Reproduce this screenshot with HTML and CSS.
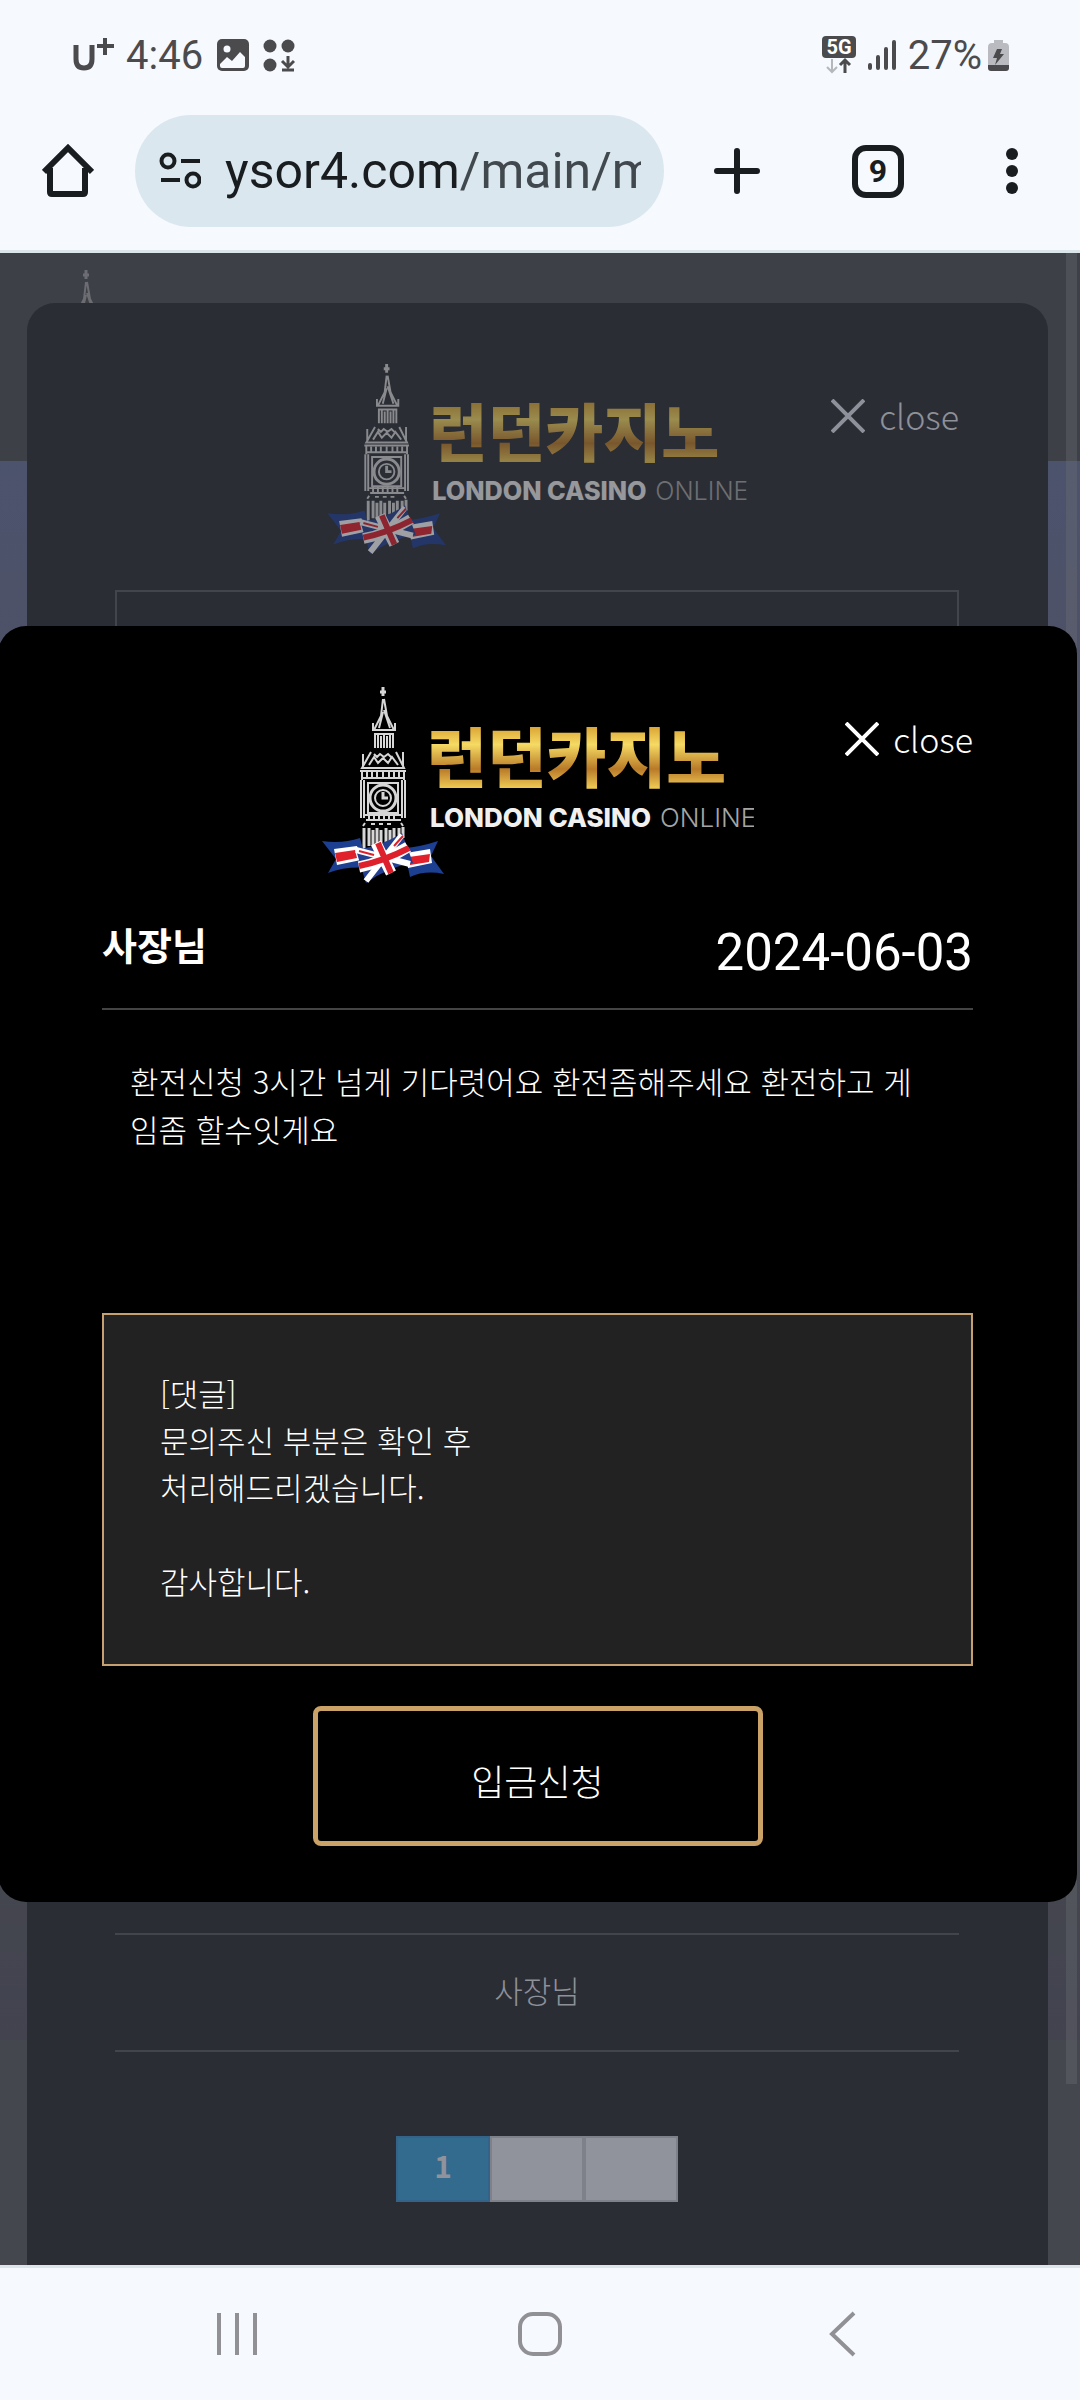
FILE: index.html
```
<!DOCTYPE html>
<html lang="ko">
<head>
  <meta charset="UTF-8">
  <meta name="viewport" content="width=device-width, initial-scale=1.0">
  <title>런던카지노</title>
  <link rel="stylesheet" href="styles.css">
</head>
<body>
  <!-- Shared logo drawing -->
  <svg class="defs" width="0" height="0" aria-hidden="true">
    <defs>
      <linearGradient id="gold" x1="0" y1="0" x2="0" y2="1">
        <stop offset="0.2" stop-color="#d9a233"/>
        <stop offset="0.4" stop-color="#f5da63"/>
        <stop offset="0.66" stop-color="#b97a28"/>
        <stop offset="0.85" stop-color="#ecc552"/>
      </linearGradient>
      <symbol id="tower" viewBox="0 0 50 164">
        <g fill="none" stroke="#d6d6d6" stroke-width="2">
          <path d="M26 1v9M23 6h6" stroke-width="3"/>
          <path d="M26 13L24 30L17 44H37L30 30L27 13M26 26l-4 16M27 24l6 18M16 37v8M38 37v8"/>
          <path d="M17 48H37M18 48V62M21 48V62M24 50V62M27 48V62M30 50V62M33 48V62M36 48V62"/>
          <path d="M14 66L5 82H47L39 66M6 68V80M46 66V80M17 68l3 3 3-3 4 3 4-3 3 3M12 79l5-8 4 6 5-5 5 5 4-6 6 8" />
          <path d="M3 85H49M5 92H47"/>
          <path d="M5 85v9M10 86v6M15 86v6M20 86v6M26 86v6M32 86v6M37 86v6M42 86v6M47 85v9"/>
          <path d="M4 94V132M7 94V132M45 94V132M48 94V132"/>
          <path d="M11 97H41V127H11Z"/>
          <circle cx="26" cy="112" r="13" stroke-width="3"/>
          <circle cx="26" cy="112" r="8"/>
          <path d="M26 106v6h5" stroke-width="3"/>
          <path d="M8 129H45M9 134H44"/>
          <path d="M12 127v6M17 127v6M22 127v6M27 127v6M32 127v6M37 127v6M14 138h4M22 138h4M30 138h4M8 137l-2 3M44 137l2 3"/>
          <path d="M7 142V163M12 142V160M16 144V160M20 142V160M24 144V160M29 142V156M33 144V156M37 142V154M42 142V156M46 141V152" stroke-width="3"/>
        </g>
      </symbol>
      <symbol id="logo" viewBox="0 0 432 200">
        <use href="#tower" x="35" y="0" width="50" height="164"/>
        <!-- Ribbon -->
        <path d="M0 155Q20 158 38 152L46 182Q25 180 6 187L14 173Z" fill="#1d3f91"/>
        <path d="M12 163l23-3 4 14-24 5z" fill="#fff"/>
        <path d="M13 167l20-3 2 8-20 4z" fill="#e0202b"/>
        <path d="M82 162Q98 161 116 155L109 170L122 188Q103 184 88 191Z" fill="#1d3f91"/>
        <path d="M84 167l24-4 2 14-24 5z" fill="#fff"/>
        <path d="M87 171l21-3-1 8-19 3z" fill="#e0202b"/>
        <path d="M34 164Q60 160 80 147L91 177Q66 181 44 197Z" fill="#233f91"/>
        <path d="M34 164L88 178M44 195L80 149" stroke="#fff" stroke-width="6"/>
        <path d="M54 157L69 187M37 181Q62 176 86 161" stroke="#fff" stroke-width="11" fill="none"/>
        <path d="M56 157L69 187M37 180Q62 175 87 162" stroke="#dd202c" stroke-width="6" fill="none"/>
        <path d="M37 165l15 4M72 160l9-10" stroke="#dd202c" stroke-width="2"/>
        <text class="logo-ko" x="105" y="96">런던카지노</text>
        <text class="logo-en" x="108" y="141">LONDON CASINO</text>
        <text class="logo-en logo-thin" x="338" y="141">ONLINE</text>
      </symbol>
      <symbol id="cross" viewBox="0 0 34 34">
        <path d="M1 1L33 33M33 1L1 33" stroke="currentColor" stroke-width="4" fill="none"/>
      </symbol>
    </defs>
  </svg>

  <!-- Status bar -->
  <div class="status-bar">
    <svg width="42" height="36" viewBox="0 0 42 36">
      <path d="M3 8V22Q3 31 11 31T19 22V8" fill="none" stroke="#4b4b4d" stroke-width="5"/>
      <path d="M32 1V18M24 9H41" stroke="#4b4b4d" stroke-width="4"/>
    </svg>
    <span class="time">4:46</span>
    <svg width="32" height="32" viewBox="0 0 32 32">
      <rect width="32" height="32" rx="5" fill="#4b4b4d"/>
      <circle cx="10" cy="10" r="3.500" fill="#f6f9fe"/>
      <path d="M3 25L10 18L15 22L23 13L28 18V27Q28 29 26 29H5Q3 29 3 27Z" fill="#f6f9fe"/>
    </svg>
    <svg class="apps" width="32" height="33" viewBox="0 0 32 33">
      <g fill="#4b4b4d"><circle cx="7" cy="7" r="6.500"/><circle cx="25" cy="7" r="6.500"/><circle cx="7" cy="26" r="6.500"/></g>
      <path d="M25 17V28M19 22L25 28L31 22M19 31H31" stroke="#4b4b4d" stroke-width="3" fill="none"/>
    </svg>
    <div class="status-right">
      <svg width="34" height="38" viewBox="0 0 34 38">
        <rect width="34" height="22" rx="4" fill="#4b4b4d"/>
        <text class="net" x="17" y="18" text-anchor="middle">5G</text>
        <path d="M10 23V36M5 31L10 36L15 31" stroke="#b5b7bb" stroke-width="2" fill="none"/>
        <path d="M23 37V24M18 29L23 24L28 29" stroke="#4b4b4d" stroke-width="3" fill="none"/>
      </svg>
      <svg width="28" height="32" viewBox="0 0 28 32">
        <path d="M2 26V29M10 18V29M18 10V29M26 3V29" stroke="#4b4b4d" stroke-width="4" stroke-linecap="round"/>
      </svg>
      <span class="battery-text">27%</span>
      <svg width="22" height="33" viewBox="0 0 22 33">
        <path d="M6 1h9v3h2q4 0 4 4v18H0V8q0-4 4-4h2z" fill="#b9bbc0"/>
        <path d="M0 26H21V29Q21 32 18 32H3Q0 32 0 29Z" fill="#4b4b4d"/>
        <path d="M9 10h5l-2 5h4L7 26l2-7H5z" fill="#4b4b4d"/>
      </svg>
    </div>
  </div>

  <!-- Browser toolbar -->
  <div class="toolbar">
    <button class="icon-btn" aria-label="Home">
      <svg width="52" height="54" viewBox="0 0 52 54">
        <path d="M2 28L26 4L50 28M8 24V48Q8 50 10 50H41Q43 50 43 48V24" fill="none" stroke="#191d20" stroke-width="6"/>
      </svg>
    </button>
    <div class="url-bar">
      <svg width="42" height="38" viewBox="0 0 42 38" fill="none" stroke="#191d20" stroke-width="4">
        <circle cx="9" cy="9" r="6.500"/><path d="M22 9H41M2 28H21"/><circle cx="34" cy="28" r="6.500"/>
      </svg>
      <div class="url">ysor4.com<span>/main/m</span></div>
    </div>
    <button class="icon-btn" aria-label="New tab">
      <svg width="46" height="46" viewBox="0 0 46 46">
        <path d="M23 3V43M3 23H43" stroke="#191d20" stroke-width="6" stroke-linecap="round"/>
      </svg>
    </button>
    <button class="tabs">9</button>
    <button class="icon-btn" aria-label="Menu">
      <svg width="12" height="46" viewBox="0 0 12 46" fill="#191d20">
        <circle cx="6" cy="6" r="6"/><circle cx="6" cy="23" r="6"/><circle cx="6" cy="40" r="6"/>
      </svg>
    </button>
  </div>

  <!-- Web page -->
  <main class="page">
    <svg class="page-logo" viewBox="0 0 50 164"><use href="#tower"/></svg>
    <section class="list-popup">
      <header class="popup-head">
        <svg class="logo" viewBox="0 0 432 200" role="img" aria-label="런던카지노"><use href="#logo"/></svg>
        <button class="close"><svg width="34" height="34"><use href="#cross"/></svg>close</button>
      </header>
      <div class="list-box"></div>
      <div class="list-row">사장님</div>
      <nav class="pagination">
        <a href="#" class="active">1</a>
        <a href="#" aria-label="Next"></a>
        <a href="#" aria-label="Last"></a>
      </nav>
    </section>
    <div class="scroll-thumb"></div>

    <section class="view-popup">
      <header class="popup-head">
        <svg class="logo" viewBox="0 0 432 200" role="img" aria-label="런던카지노"><use href="#logo"/></svg>
        <button class="close"><svg width="34" height="34"><use href="#cross"/></svg>close</button>
      </header>
      <div class="title-row">
        <h2>사장님</h2>
        <time datetime="2024-06-03">2024-06-03</time>
      </div>
      <p class="message">환전신청 3시간 넘게 기다렷어요 환전좀해주세요 환전하고 게임좀 할수잇게요</p>
      <div class="reply">
        [댓글]<br>
        문의주신 부분은 확인 후<br>
        처리해드리겠습니다.<br>
        <br>
        감사합니다.
      </div>
      <button class="deposit">입금신청</button>
    </section>
  </main>

  <!-- System navigation -->
  <nav class="system-nav">
    <button class="icon-btn" aria-label="Recents">
      <svg width="44" height="44" viewBox="0 0 44 44"><path d="M3 1V43M21 1V43M39 1V43" stroke="#919195" stroke-width="4"/></svg>
    </button>
    <button class="icon-btn" aria-label="Home">
      <svg width="44" height="44" viewBox="0 0 44 44"><rect x="2" y="2" width="40" height="40" rx="13" fill="none" stroke="#919195" stroke-width="4"/></svg>
    </button>
    <button class="icon-btn" aria-label="Back">
      <svg width="44" height="46" viewBox="0 0 44 46"><path d="M34 2L12 23L34 44" fill="none" stroke="#919195" stroke-width="4"/></svg>
    </button>
  </nav>
</body>
</html>
```
FILE: styles.css
```
/* Base Styling */
* {
  box-sizing: border-box;
}

body {
  margin: 0;
  min-height: 100vh;
  display: flex;
  flex-direction: column;
  background-color: #f6f9fe;
  font-family: "Noto Sans CJK KR", sans-serif;
  font-weight: 300;
}

button {
  font-family: inherit;
  font-weight: inherit;
  border: none;
  background: none;
  padding: 0;
  cursor: pointer;
}

svg {
  display: block;
  flex-shrink: 0;
}

.defs {
  position: absolute;
}

/* Status Bar */
.status-bar {
  display: flex;
  align-items: center;
  height: 110px;
  padding: 0 70px 0 73px;
  color: #4b4b4d;
  font-family: Roboto, sans-serif;
  font-size: 40px;
  font-weight: 400;
}

.time {
  margin: 0 14px 0 11px;
}

.apps {
  margin-left: 14px;
}

.status-right {
  display: flex;
  align-items: center;
  gap: 12px;
  margin-left: auto;
}

.battery-text {
  margin-right: -6px;
}

.net {
  font-family: Roboto, sans-serif;
  font-size: 20px;
  font-weight: 700;
  fill: #fff;
}

/* Browser Toolbar */
.toolbar {
  display: flex;
  align-items: center;
  height: 143px;
  padding: 0 62px 18px 42px;
  border-bottom: 3px solid #dce5ea;
}

.url-bar {
  flex: 1;
  display: flex;
  align-items: center;
  gap: 24px;
  min-width: 0;
  height: 112px;
  margin: 0 50px 0 41px;
  padding: 0 23px 0 24px;
  border-radius: 56px;
  background-color: #dae7ef;
}

.url {
  flex: 1;
  overflow: hidden;
  white-space: nowrap;
  font-family: Roboto, sans-serif;
  font-size: 50px;
  font-weight: 400;
  line-height: 62px;
  color: #191d20;
}

.url span {
  color: #41494e;
}

.tabs {
  width: 52px;
  height: 53px;
  margin: 0 102px 0 92px;
  border: 6px solid #191d20;
  border-radius: 14px;
  font-family: Roboto, sans-serif;
  font-size: 32px;
  font-weight: 700;
  line-height: 40px;
  color: #191d20;
}

/* Page behind the popups */
.page {
  position: relative;
  flex: 1;
  display: flex;
  flex-direction: column;
  min-height: 1760px;
  padding: 50px 32px 0 27px;
  overflow: hidden;
  background: linear-gradient(#3e4048 208px, #4c536d 208px, #504f5e 700px, #43454f 1100px, #45474f 1600px, #42434f 1787px, #45474f 1787px);
}

.page-logo {
  position: absolute;
  top: 16px;
  left: 60px;
  width: 50px;
  height: 164px;
  opacity: 0.3;
}

.scroll-thumb {
  position: absolute;
  top: 0;
  right: 3px;
  width: 11px;
  height: 91%;
  background-color: rgba(110, 112, 118, 0.35);
}

/* Popups */
.popup-head {
  display: grid;
  grid-template-columns: 1fr auto 1fr;
  align-items: start;
}

.logo {
  grid-column: 2;
  width: 432px;
  height: 200px;
}

.logo-ko {
  font-size: 65px;
  font-weight: 900;
  fill: url(#gold);
}

.logo-en {
  font-family: Inter, sans-serif;
  font-size: 26px;
  font-weight: 800;
  fill: #f0f0f0;
}

.logo-thin {
  font-weight: 300;
  fill: #a5a5a5;
}

.close {
  display: flex;
  align-items: center;
  justify-self: end;
  gap: 14px;
  margin-top: 33px;
  font-size: 34px;
  line-height: 40px;
  color: #fff;
}

.list-popup {
  position: relative;
  flex: 1;
  display: flex;
  flex-direction: column;
  padding: 60px 89px 63px 88px;
  border-radius: 28px 28px 0 0;
  background-color: #2b2d35;
}

.list-popup .logo {
  width: 420px;
  height: 194px;
  opacity: 0.55;
}

.list-popup .close {
  color: #8e9199;
}

.list-box {
  flex: 1;
  margin: 33px 0 82px;
  border: 2px solid #43454d;
}

.list-row {
  padding: 31px 0 37px;
  border-top: 2px solid #43454d;
  border-bottom: 2px solid #43454d;
  text-align: center;
  font-size: 31px;
  line-height: 47px;
  color: #8e9199;
}

.pagination {
  display: flex;
  justify-content: center;
  margin-top: 84px;
}

.pagination a {
  width: 94px;
  height: 66px;
  border: 2px solid #7e8189;
  background-color: #90939c;
  text-align: center;
  text-decoration: none;
  font-size: 30px;
  font-weight: 700;
  line-height: 54px;
  color: #90939c;
}

.pagination .active {
  border-color: #346387;
  background-color: #336b8e;
}

.view-popup {
  position: absolute;
  top: 373px;
  left: -2px;
  right: 3px;
  padding: 60px 104px 56px;
  border-radius: 28px;
  background-color: #000;
  color: #fff;
}

.title-row {
  display: flex;
  justify-content: space-between;
  padding: 30px 0 18px;
  border-bottom: 2px solid #444;
}

.title-row h2 {
  margin: 0;
  font-size: 38px;
  font-weight: 700;
  line-height: 56px;
}

.title-row time {
  font-family: Roboto, sans-serif;
  font-size: 51px;
  font-weight: 400;
  line-height: 74px;
}

.message {
  min-height: 303px;
  margin: 0;
  padding: 47px 40px 0 28px;
  font-size: 31px;
  line-height: 48px;
}

.reply {
  padding: 54px 56px 60px;
  border: 2px solid #c5a071;
  background-color: #222;
  font-size: 31px;
  line-height: 47px;
}

.deposit {
  display: block;
  width: 450px;
  height: 140px;
  margin: 40px auto 0;
  padding-top: 8px;
  border: 5px solid #caa267;
  border-radius: 8px;
  font-size: 36px;
  color: #fff;
}

/* System Navigation */
.system-nav {
  display: flex;
  align-items: center;
  justify-content: space-between;
  height: 135px;
  padding: 0 216px;
  border-top: 3px solid #dce5ea;
}
```
